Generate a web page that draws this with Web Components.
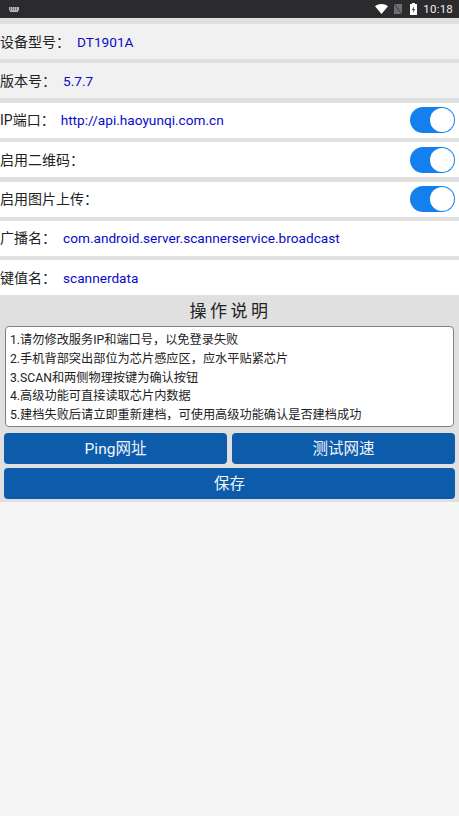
<!DOCTYPE html>
<html>
<head>
<meta charset="utf-8">
<style>
    html, body { margin: 0; padding: 0; height: 100%; background: #f5f5f5; }
    body { font-family: Roboto, "Noto Sans CJK SC", sans-serif; overflow: hidden; }
</style>
</head>
<body>
<status-bar></status-bar>
<settings-list>
    <setting-row tone="grey" label="设备型号：" value="DT1901A" gap="7"></setting-row>
    <setting-row tone="grey" label="版本号：" value="5.7.7" gap="7"></setting-row>
    <setting-row label="IP端口：" value="http://api.haoyunqi.com.cn" gap="6" toggle></setting-row>
    <setting-row label="启用二维码：" toggle></setting-row>
    <setting-row label="启用图片上传：" toggle></setting-row>
    <setting-row label="广播名：" value="com.android.server.scannerservice.broadcast" gap="7"></setting-row>
    <setting-row label="键值名：" value="scannerdata" gap="7"></setting-row>
</settings-list>
<help-panel>
    <div>1.请勿修改服务IP和端口号，以免登录失败</div>
    <div>2.手机背部突出部位为芯片感应区，应水平贴紧芯片</div>
    <div>3.SCAN和两侧物理按键为确认按钮</div>
    <div>4.高级功能可直接读取芯片内数据</div>
    <div>5.建档失败后请立即重新建档，可使用高级功能确认是否建档成功</div>
</help-panel>

<script>
class StatusBar extends HTMLElement {
    constructor() {
        super();
        this.attachShadow({ mode: 'open' });
        this.shadowRoot.innerHTML = `
            <style>
                :host {
                    display: flex;
                    align-items: center;
                    height: 18px;
                    padding: 0 6px 0 9px;
                    background-color: #2b2b2d;
                    color: #eeeeee;
                    font-family: Roboto, sans-serif;
                    font-size: 11.5px;
                    letter-spacing: 0.2px;
                }
                .keys { margin-right: auto; display: block; }
                .wifi { margin-right: 6px; }
                .sim { margin-right: 8px; }
                .battery { margin-right: 6px; }
                svg { display: block; }
            </style>
            <svg class="keys" width="10" height="5" viewBox="0 0 10 5">
                <path d="M0 0h10v3.500H9V5H1V3.500H0z" fill="#b9b9b9"/>
                <path d="M1 1h1M3 1h1M5 1h1M7 1h1M1 2.800h1M3 2.800h1M5 2.800h1M7 2.800h1" stroke="#2b2b2d" stroke-width="0.8"/>
            </svg>
            <svg class="wifi" width="13" height="10" viewBox="0 0 13 10">
                <path d="M0 2.200C3.800-.7 9.200-.7 13 2.200L6.500 10z" fill="#ffffff"/>
            </svg>
            <svg class="sim" width="8" height="10" viewBox="0 0 8 10">
                <path d="M8 0v10H0V0z" fill="#6e6e70"/>
                <path d="M0 0l8 10" stroke="#2b2b2d" stroke-width="0.8"/>
            </svg>
            <svg class="battery" width="7" height="12" viewBox="0 0 7 12">
                <path d="M2 0h3v1h2v11H0V1h2z" fill="#ffffff"/>
                <path d="M4 3L2 7h1.500L3 10l2-4H3.500z" fill="#2b2b2d"/>
            </svg>
            <span>10:18</span>
        `;
    }
}

class SettingsList extends HTMLElement {
    constructor() {
        super();
        this.attachShadow({ mode: 'open' });
        this.shadowRoot.innerHTML = `
            <style>
                :host {
                    display: flex;
                    flex-direction: column;
                    gap: 4.4px;
                    padding-top: 6px;
                    background-color: #e0e0e0;
                }
            </style>
            <slot></slot>
        `;
    }
}

class SettingRow extends HTMLElement {
    constructor() {
        super();
        this.attachShadow({ mode: 'open' });
        this.shadowRoot.innerHTML = `
            <style>
                :host {
                    display: flex;
                    align-items: center;
                    height: 35px;
                    background-color: #ffffff;
                    font-size: 14px;
                    color: #222222;
                }
                :host([tone="grey"]) {
                    background-color: #f1f1f1;
                }
                .label {
                    padding-bottom: 2px;
                }
                .value {
                    color: #0a0ac8;
                    font-size: 13.65px;
                }
                .switch {
                    position: relative;
                    box-sizing: border-box;
                    width: 45px;
                    height: 26px;
                    margin-left: auto;
                    margin-right: 4px;
                    border-radius: 13px;
                    background-color: #1480ee;
                }
                .switch::after {
                    content: "";
                    position: absolute;
                    top: 1px;
                    right: 1px;
                    width: 24px;
                    height: 24px;
                    border-radius: 50%;
                    background-color: #ffffff;
                }
            </style>
            <span class="label"></span>
            <span class="value"></span>
        `;
    }

    connectedCallback() {
        this.shadowRoot.querySelector('.label').textContent = this.getAttribute('label');
        const value = this.shadowRoot.querySelector('.value');
        value.textContent = this.getAttribute('value') || '';
        value.style.marginLeft = (this.getAttribute('gap') || 0) + 'px';
        if (this.hasAttribute('toggle')) {
            const sw = document.createElement('div');
            sw.className = 'switch';
            this.shadowRoot.appendChild(sw);
        }
    }
}

class AppButton extends HTMLElement {
    constructor() {
        super();
        this.attachShadow({ mode: 'open' });
        this.shadowRoot.innerHTML = `
            <style>
                :host {
                    display: flex;
                    align-items: center;
                    justify-content: center;
                    box-sizing: border-box;
                    height: 31px;
                    padding-bottom: 3px;
                    border-radius: 4px;
                    background-color: #0d5cab;
                    color: #f2f6fb;
                    font-size: 15.500px;
                }
            </style>
            <slot></slot>
        `;
    }
}

class HelpPanel extends HTMLElement {
    constructor() {
        super();
        this.attachShadow({ mode: 'open' });
        this.shadowRoot.innerHTML = `
            <style>
                :host {
                    display: block;
                    height: 207px;
                    box-sizing: border-box;
                    background-color: #e0e0e0;
                }
                h2 {
                    margin: 0;
                    height: 31px;
                    padding: 1px 0 0 2px;
                    box-sizing: border-box;
                    line-height: 30px;
                    text-align: center;
                    font-size: 17px;
                    font-weight: 400;
                    letter-spacing: 3.500px;
                    color: #222222;
                }
                .notes {
                    box-sizing: border-box;
                    height: 101px;
                    margin: 0 5px;
                    padding: 4px 4px 0;
                    border: 1px solid #808080;
                    border-radius: 4px;
                    background-color: #ffffff;
                    font-size: 12.200px;
                    line-height: 18.700px;
                    color: #222222;
                }
                .actions {
                    display: grid;
                    grid-template-columns: 1fr 1fr;
                    gap: 4px 5px;
                    margin: 6px 4px 0;
                }
                .wide { grid-column: span 2; }
            </style>
            <h2>操作说明</h2>
            <div class="notes"><slot></slot></div>
            <div class="actions">
                <app-button>Ping网址</app-button>
                <app-button>测试网速</app-button>
                <app-button class="wide">保存</app-button>
            </div>
        `;
    }
}

customElements.define('status-bar', StatusBar);
customElements.define('settings-list', SettingsList);
customElements.define('setting-row', SettingRow);
customElements.define('app-button', AppButton);
customElements.define('help-panel', HelpPanel);
</script>
</body>
</html>
